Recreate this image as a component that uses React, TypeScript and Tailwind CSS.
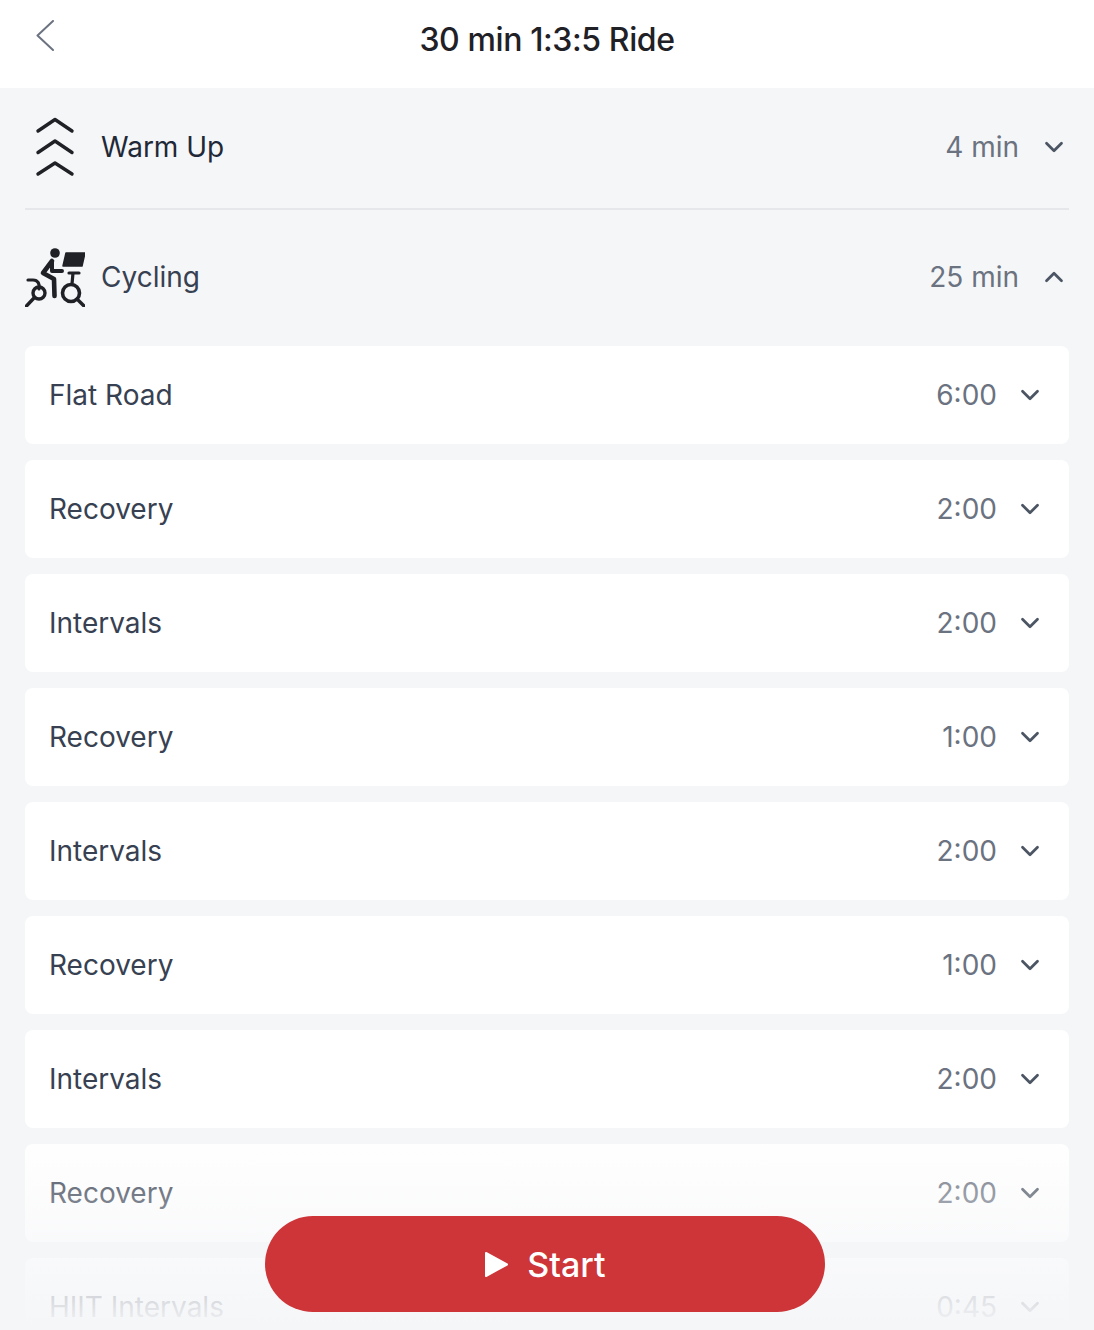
import { ChevronDown, ChevronUp } from 'lucide-react';

const steps = [
    { name: 'Flat Road', time: '6:00' },
    { name: 'Recovery', time: '2:00' },
    { name: 'Intervals', time: '2:00' },
    { name: 'Recovery', time: '1:00' },
    { name: 'Intervals', time: '2:00' },
    { name: 'Recovery', time: '1:00' },
    { name: 'Intervals', time: '2:00' },
    { name: 'Recovery', time: '2:00' },
    { name: 'HIIT Intervals', time: '0:45' },
];

const WarmUpIcon = () => (
    <svg width="60" height="60" viewBox="0 0 60 60" fill="none" stroke="#1f2126" strokeWidth="3.4" strokeLinecap="round" strokeLinejoin="round">
        <path d="M13 14 L30 2.5 L47 14" />
        <path d="M13 36 L30 24.5 L47 36" transform="translate(0 -0.5)" />
        <path d="M13 57 L30 46 L47 57" />
    </svg>
);

const CyclingIcon = () => (
    <svg width="60" height="60" viewBox="0 0 60 60" fill="none" stroke="#1f2126" strokeWidth="3.4" strokeLinecap="round" strokeLinejoin="round">
        <circle cx="30" cy="6" r="4.8" fill="#1f2126" stroke="none" />
        <path d="M27 14 L18 26 L29 32 L29.5 49" strokeWidth="4.6" />
        <path d="M27 15 L27 24 L37 24" strokeWidth="4" />
        <path d="M41 6 H60 L57 19 H38 Z" fill="#1f2126" stroke="#1f2126" strokeWidth="1.5" />
        <path d="M44 26 H54 M48 26 L47 37" strokeWidth="3.2" />
        <path d="M3 33 H8 C13 33 15 37 14 42" strokeWidth="3.2" />
        <circle cx="14" cy="46" r="6" strokeWidth="3.4" />
        <path d="M9 51 L1.5 59" />
        <circle cx="46" cy="46" r="8.5" strokeWidth="3.6" />
        <path d="M52 52 L59 59" />
    </svg>
);

const App = () => {
    return (
        <div className="relative h-[1330px] overflow-hidden bg-[#f5f6f8] font-['Inter',sans-serif]">
            {/* header */}
            <header className="relative flex h-[88px] items-center justify-center bg-white">
                <svg className="absolute left-[36px] top-[20px]" width="18" height="31" viewBox="0 0 18 31" fill="none" stroke="#6b7280" strokeWidth="2" strokeLinecap="round" strokeLinejoin="round">
                    <path d="M17 1 L1.5 15.5 L17 30" />
                </svg>
                <h1 className="pb-[8px] text-[32px] font-medium tracking-[-0.4px] text-[#1f2126]">30 min 1:3:5 Ride</h1>
            </header>

            <main className="px-[25px]">
                {/* warm up */}
                <section className="flex h-[122px] items-center justify-between border-b-2 border-[#e5e7eb] pb-[2px]">
                    <div className="flex items-center gap-[16px]">
                        <WarmUpIcon />
                        <span className="text-[28px] text-[#1f2937]">Warm Up</span>
                    </div>
                    <div className="flex items-center gap-[20px] text-[#6b7280]">
                        <span className="text-[28px]">4 min</span>
                        <ChevronDown size={30} strokeWidth={2.2} className="text-[#4b5563]" />
                    </div>
                </section>

                {/* cycling */}
                <section className="flex h-[136px] items-center justify-between pb-[2px]">
                    <div className="flex items-center gap-[16px]">
                        <CyclingIcon />
                        <span className="text-[28px] text-[#374151]">Cycling</span>
                    </div>
                    <div className="flex items-center gap-[20px] text-[#6b7280]">
                        <span className="text-[28px]">25 min</span>
                        <ChevronUp size={30} strokeWidth={2.2} className="text-[#4b5563]" />
                    </div>
                </section>

                <ul className="flex flex-col gap-[16px]">
                    {steps.map((step, i) => (
                        <li key={i} className="flex h-[98px] shrink-0 items-center justify-between rounded-[8px] bg-white pl-[24px] pr-[24px]">
                            <span className="text-[28px] text-[#374151]">{step.name}</span>
                            <div className="flex items-center gap-[18px]">
                                <span className="text-[28px] text-[#6b7280]">{step.time}</span>
                                <ChevronDown size={30} strokeWidth={2.2} className="text-[#4b5563]" />
                            </div>
                        </li>
                    ))}
                </ul>
            </main>

            {/* fade over the list */}
            <div className="absolute inset-x-0 bottom-0 h-[200px] bg-gradient-to-b from-[#f5f6f8]/0 to-[#f5f6f8]" />

            <button className="absolute bottom-[18px] left-[265px] flex h-[96px] w-[560px] items-center justify-center gap-[18px] rounded-full bg-[#cd3538] text-[34px] font-medium text-white">
                <svg width="25" height="27" viewBox="0 0 25 27" fill="#fff" stroke="#fff" strokeWidth="2" strokeLinejoin="round">
                    <path d="M2 2 L23 13.5 L2 25 Z" />
                </svg>
                Start
            </button>
        </div>
    );
};

export default App;
